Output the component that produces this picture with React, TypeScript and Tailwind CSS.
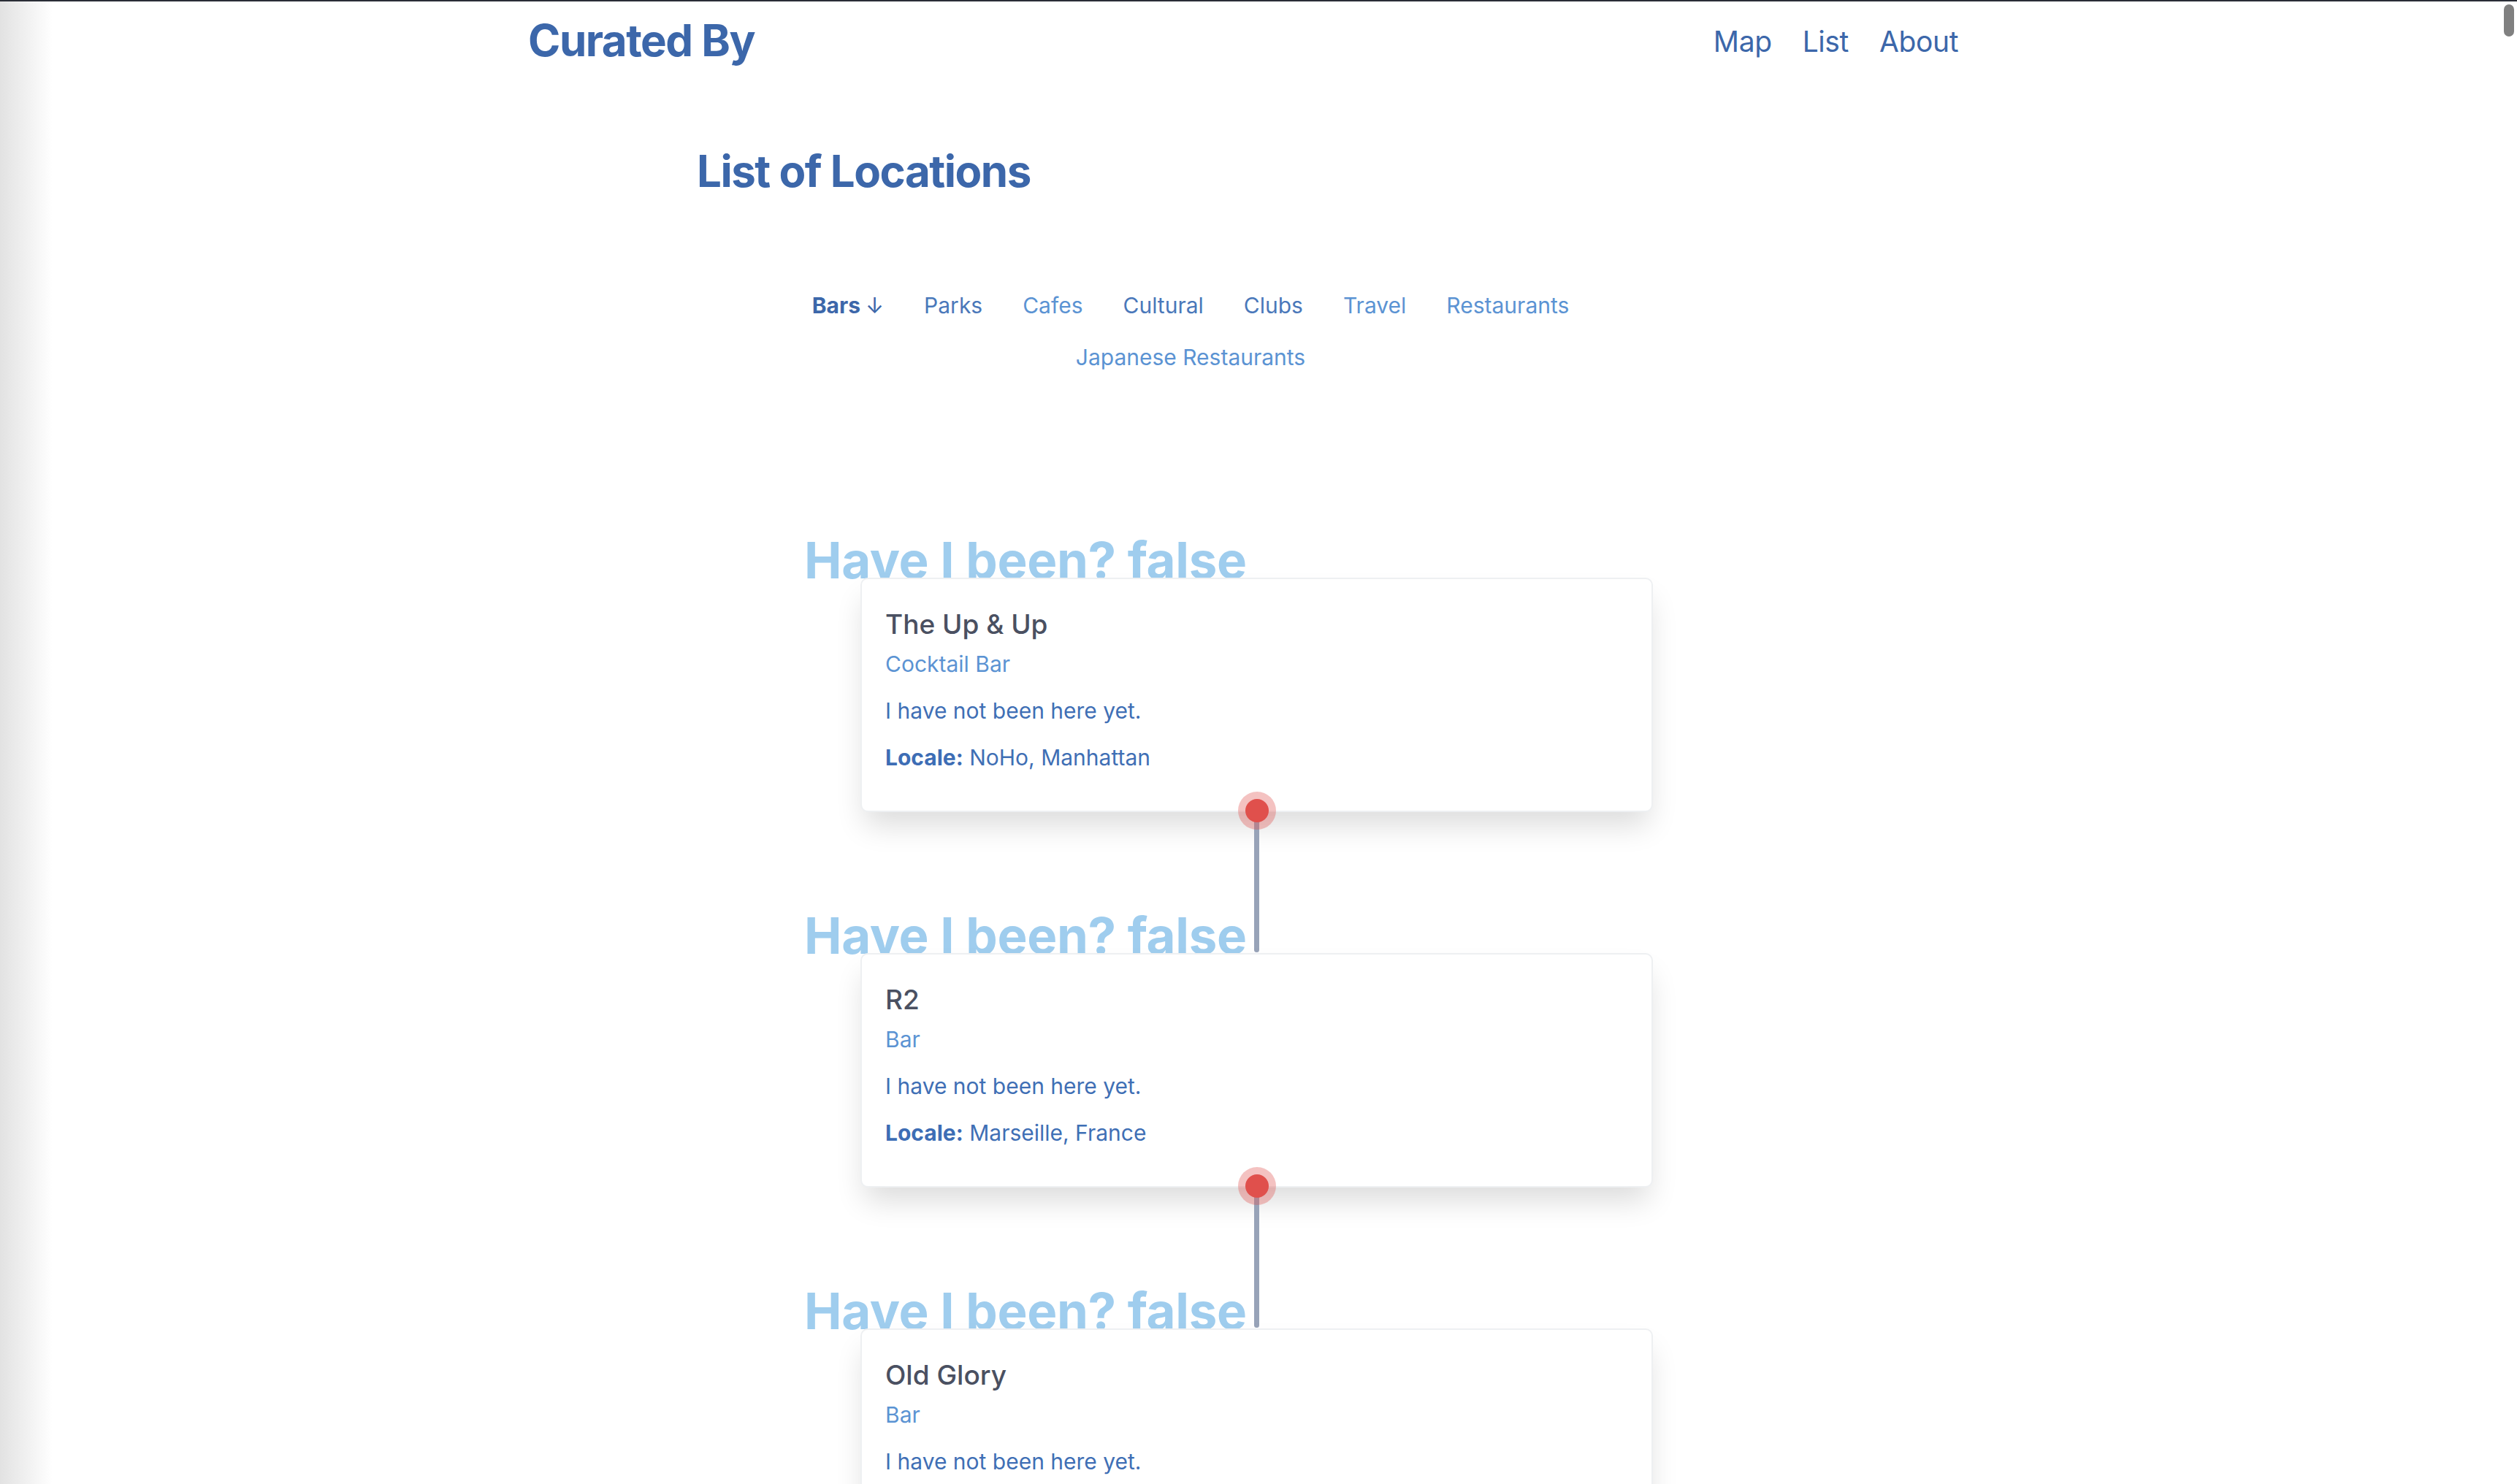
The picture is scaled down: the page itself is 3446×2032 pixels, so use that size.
import { useState } from 'react';

interface Place {
  name: string;
  kind: string;
  locale: string;
  been: boolean;
}

const places: Place[] = [
  { name: 'The Up & Up', kind: 'Cocktail Bar', locale: 'NoHo, Manhattan', been: false },
  { name: 'R2', kind: 'Bar', locale: 'Marseille, France', been: false },
  { name: 'Old Glory', kind: 'Bar', locale: 'Brooklyn, New York', been: false },
];

const categories = [
  { label: 'Parks', tone: 'text-[#4a78ba]' },
  { label: 'Cafes', tone: 'text-[#5b93d3]' },
  { label: 'Cultural', tone: 'text-[#4a78ba]' },
  { label: 'Clubs', tone: 'text-[#4a78ba]' },
  { label: 'Travel', tone: 'text-[#5b93d3]' },
  { label: 'Restaurants', tone: 'text-[#5b93d3]' },
  { label: 'Japanese Restaurants', tone: 'text-[#5b93d3]' },
];

function PlaceCard({ place }: { place: Place }) {
  return (
    <div>
      <h2 className="text-[69px] leading-[68px] font-bold tracking-[-0.005em] text-[#9fcdee]">
        Have I been? {String(place.been)}
      </h2>
      <div className="relative ml-[77px] mt-[-10px] w-[1085px] rounded-[10px] border-2 border-[#eef0f2] bg-white px-[32px] pt-[38px] pb-[53px] shadow-[0_24px_40px_-6px_rgba(0,0,0,0.14)]">
        <h3 className="text-[37px] leading-[48px] font-medium text-[#4a5061]">{place.name}</h3>
        <p className="mt-[10px] text-[30px] leading-[40px] text-[#5b93d3]">{place.kind}</p>
        <p className="mt-[24px] text-[30px] leading-[40px] text-[#3f6fb5]">
          I have {place.been ? '' : 'not '}been here yet.
        </p>
        <p className="mt-[24px] text-[30px] leading-[40px] text-[#3f6fb5]">
          <span className="font-bold text-[#3d6db5]">Locale:</span> {place.locale}
        </p>
        {/* pin + line down to the next card */}
        <div className="absolute left-1/2 bottom-[-194px] flex h-[220px] w-[52px] -translate-x-1/2 flex-col items-center">
          <div className="relative z-10 flex h-[52px] w-[52px] items-center justify-center rounded-full bg-[#e0504c]/35">
            <div className="h-[32px] w-[32px] rounded-full bg-[#e0504c]" />
          </div>
          <div className="mt-[-26px] w-[7px] flex-1 rounded-b-full bg-[#98a3b8]" />
        </div>
      </div>
    </div>
  );
}

export default function App() {
  const [active] = useState('Bars');

  return (
    <div className="relative h-screen w-full overflow-hidden border-t-2 border-[#2a2d36] bg-white font-['Inter','Liberation_Sans',sans-serif]">
      <div className="pointer-events-none absolute inset-y-0 left-0 w-[72px] bg-gradient-to-r from-[#e2e2e2] to-white/0" />
      <div className="absolute right-[4px] top-[4px] h-[44px] w-[14px] rounded-full bg-[#808080]" />

      <header className="ml-[723px] flex w-[1958px] items-start justify-between pt-[17px]">
        <a className="text-[60px] leading-[72px] font-bold tracking-[-0.025em] text-[#3c67aa]">Curated By</a>
        <nav className="flex gap-[42px] pt-[14px] text-[39px] leading-[48px] tracking-[-0.01em] text-[#3c67aa]">
          <a>Map</a>
          <a>List</a>
          <a>About</a>
        </nav>
      </header>

      <main className="ml-[954px] pt-[107px]">
        <h1 className="text-[60px] leading-[72px] font-bold tracking-[-0.025em] text-[#3c67aa]">List of Locations</h1>

        <div className="mt-[128px] ml-[-6px] flex w-[1364px] flex-wrap justify-center gap-x-[55px] gap-y-[31px] text-[30px] leading-[40px]">
          <a className="font-bold text-[#3c67aa]">
            {active} <span className="font-normal">↓</span>
          </a>
          {categories.map((c) => (
            <a key={c.label} className={c.tone}>
              {c.label}
            </a>
          ))}
        </div>

        <div className="ml-[147px] mt-[224px] flex flex-col gap-[135px]">
          {places.map((p) => (
            <PlaceCard key={p.name} place={p} />
          ))}
        </div>
      </main>
    </div>
  );
}
